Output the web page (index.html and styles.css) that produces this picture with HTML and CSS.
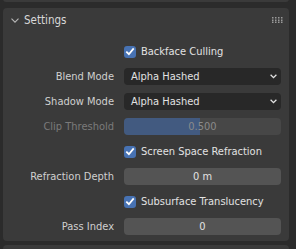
FILE: index.html
```html
<!DOCTYPE html>
<html lang="en">
<head>
  <meta charset="UTF-8">
  <title>Settings</title>
  <link rel="stylesheet" href="styles.css">
</head>
<body>

<div class="panel stub-top"></div>

<div class="panel settings">
  <div class="panel-header">
    <svg class="chev" width="8" height="5" viewBox="0 0 8 5"><path d="M0.5 0.6 L4 4.1 L7.5 0.6" fill="none" stroke="#b8b8b8" stroke-width="1.1"/></svg>
    <span class="title">Settings</span>
    <svg class="grip" width="11" height="6" viewBox="0 0 11 6">
      <rect x="0" y="0" width="1.5" height="1.5" fill="#9a9a9a"/><rect x="3" y="0" width="1.5" height="1.5" fill="#9a9a9a"/><rect x="6" y="0" width="1.5" height="1.5" fill="#9a9a9a"/><rect x="9" y="0" width="1.5" height="1.5" fill="#9a9a9a"/>
      <rect x="0" y="2.5" width="1.5" height="1.5" fill="#9a9a9a"/><rect x="3" y="2.5" width="1.5" height="1.5" fill="#9a9a9a"/><rect x="6" y="2.5" width="1.5" height="1.5" fill="#9a9a9a"/><rect x="9" y="2.5" width="1.5" height="1.5" fill="#9a9a9a"/>
      <rect x="0" y="4.5" width="1.5" height="1.5" fill="#9a9a9a"/><rect x="3" y="4.5" width="1.5" height="1.5" fill="#9a9a9a"/><rect x="6" y="4.5" width="1.5" height="1.5" fill="#9a9a9a"/><rect x="9" y="4.5" width="1.5" height="1.5" fill="#9a9a9a"/>
    </svg>
  </div>

  <div class="props">
    <div class="label"></div>
    <label class="check"><span class="box"><svg width="10" height="9" viewBox="0 0 10 9"><path d="M1.3 4.6 L3.9 7.2 L8.7 1.4" fill="none" stroke="#fff" stroke-width="1.8"/></svg></span>Backface Culling</label>

    <div class="label">Blend Mode</div>
    <div class="field menu">Alpha Hashed<svg class="down" width="7" height="5" viewBox="0 0 7 5"><path d="M0.6 0.8 L3.5 3.7 L6.4 0.8" fill="none" stroke="#e0e0e0" stroke-width="1.3"/></svg></div>

    <div class="label">Shadow Mode</div>
    <div class="field menu">Alpha Hashed<svg class="down" width="7" height="5" viewBox="0 0 7 5"><path d="M0.6 0.8 L3.5 3.7 L6.4 0.8" fill="none" stroke="#e0e0e0" stroke-width="1.3"/></svg></div>

    <div class="label off">Clip Threshold</div>
    <div class="field num slider off"><div class="fill" style="width: 48.5%"></div><span>0.500</span></div>

    <div class="label"></div>
    <label class="check"><span class="box"><svg width="10" height="9" viewBox="0 0 10 9"><path d="M1.3 4.6 L3.9 7.2 L8.7 1.4" fill="none" stroke="#fff" stroke-width="1.8"/></svg></span>Screen Space Refraction</label>

    <div class="label">Refraction Depth</div>
    <div class="field num"><span>0 m</span></div>

    <div class="label"></div>
    <label class="check"><span class="box"><svg width="10" height="9" viewBox="0 0 10 9"><path d="M1.3 4.6 L3.9 7.2 L8.7 1.4" fill="none" stroke="#fff" stroke-width="1.8"/></svg></span>Subsurface Translucency</label>

    <div class="label">Pass Index</div>
    <div class="field num"><span>0</span></div>
  </div>
</div>

<div class="panel stub-bottom"></div>

</body>
</html>
```

FILE: styles.css
```css
* { box-sizing: border-box; }
body {
  margin: 0;
  width: 296px;
  height: 249px;
  overflow: hidden;
  background-color: #2b2b2b;
  font-family: "DejaVu Sans Condensed", "DejaVu Sans", sans-serif;
  font-stretch: semi-condensed;
  font-size: 11px;
  color: #d0d0d0;
}
.panel {
  width: 286px;
  margin-left: 3px;
  background-color: #3a3a3a;
  border-radius: 4px;
}
.stub-top {
  height: 6px;
  margin-top: -4px;
}
.settings {
  margin-top: 6px;
  padding-bottom: 6px;
}
.stub-bottom {
  height: 10px;
  margin-top: 4px;
}
.panel-header {
  height: 24px;
  display: flex;
  align-items: center;
  padding-left: 8px;
  padding-right: 6px;
}
.chev { margin-right: 5px; }
.title {
  flex: 1;
  font-size: 11.5px;
  color: #d8d8d8;
}
.props {
  display: grid;
  grid-template-columns: 111px 157px;
  column-gap: 10px;
  row-gap: 8px;
  padding-top: 11px;
}
.label {
  height: 17px;
  line-height: 17px;
  text-align: right;
  white-space: nowrap;
}
.label.off { color: #7a7a7a; }
.check {
  height: 17px;
  display: flex;
  align-items: center;
  white-space: nowrap;
  color: #e2e2e2;
}
.box {
  width: 12px;
  height: 12px;
  margin-right: 5px;
  border-radius: 3px;
  background-color: #4772b3;
  display: flex;
  align-items: center;
  justify-content: center;
}
.field {
  height: 17px;
  border-radius: 4px;
  position: relative;
  overflow: hidden;
  color: #e2e2e2;
}
.menu {
  background-color: #282828;
  display: flex;
  align-items: center;
  justify-content: space-between;
  padding-left: 7px;
  padding-right: 4px;
}
.num {
  background-color: #545454;
  display: flex;
  align-items: center;
  justify-content: center;
}
.num span { position: relative; }
.slider.off {
  background-color: #474747;
  color: #8a8a8a;
}
.fill {
  position: absolute;
  left: 0;
  top: 0;
  bottom: 0;
  background-color: #425a80;
}
```
